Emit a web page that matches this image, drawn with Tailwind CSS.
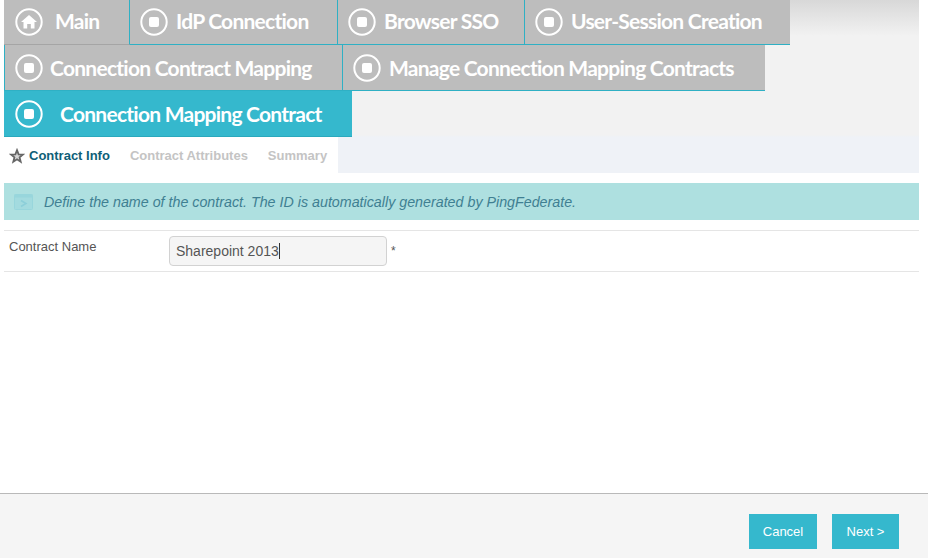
<!DOCTYPE html>
<html lang="en">
<head>
    <meta charset="UTF-8">
    <title>Connection Mapping Contract</title>
    <script src="https://cdn.jsdelivr.net/npm/@tailwindcss/browser@4"></script>
</head>
<body class="bg-white w-[928px] h-[558px] overflow-hidden flex flex-col font-['Liberation_Sans',sans-serif]">
    <!-- Breadcrumb + wizard tabs -->
    <div class="mx-1 w-[915px] h-[173px] bg-[linear-gradient(#d8d8d8_0px,#f2f2f2_36px,#f2f2f2_135px,#eff2f7_137px)] shrink-0">
        <div class="flex h-[45px] font-['Lato',sans-serif] font-bold text-[21px] tracking-[-0.75px] text-white">
            <a class="w-[126px] flex items-center bg-[#bdbdbd] border-r border-b border-r-[#2fb0c4] border-b-[#a5a5a5] pl-[11px] gap-3">
                <svg class="w-7 h-7" viewBox="0 0 28 28"><circle cx="14" cy="14" r="12.7" fill="none" stroke="#fff" stroke-width="2"/><path d="M14 7 L22 14 H19.5 V20.5 H15.8 V16 H12.2 V20.5 H8.5 V14 H6 Z" fill="#fff"/></svg>
                <span class="pb-[2px]">Main</span>
            </a>
            <a class="w-[208px] flex items-center bg-[#bdbdbd] border-r border-b border-[#2fb0c4] pl-[10px] gap-2">
                <svg class="w-7 h-7" viewBox="0 0 28 28"><circle cx="14" cy="14" r="12.7" fill="none" stroke="#fff" stroke-width="2"/><rect x="9" y="9" width="10" height="10" rx="2" fill="#fff"/></svg>
                <span class="pb-[2px]">IdP Connection</span>
            </a>
            <a class="w-[187px] flex items-center bg-[#bdbdbd] border-r border-b border-[#2fb0c4] pl-[10px] gap-2">
                <svg class="w-7 h-7" viewBox="0 0 28 28"><circle cx="14" cy="14" r="12.7" fill="none" stroke="#fff" stroke-width="2"/><rect x="9" y="9" width="10" height="10" rx="2" fill="#fff"/></svg>
                <span class="pb-[2px]">Browser SSO</span>
            </a>
            <a class="w-[265px] flex items-center bg-[#bdbdbd] border-b border-[#2fb0c4] pl-[10px] gap-2">
                <svg class="w-7 h-7" viewBox="0 0 28 28"><circle cx="14" cy="14" r="12.7" fill="none" stroke="#fff" stroke-width="2"/><rect x="9" y="9" width="10" height="10" rx="2" fill="#fff"/></svg>
                <span class="pb-[2px]">User-Session Creation</span>
            </a>
        </div>
        <div class="flex h-[46px] font-['Lato',sans-serif] font-bold text-[21px] tracking-[-0.75px] text-white">
            <a class="w-[339px] flex items-center bg-[#bdbdbd] border-l border-r border-b border-[#2fb0c4] pl-[10px] gap-[7px]">
                <svg class="w-7 h-7" viewBox="0 0 28 28"><circle cx="14" cy="14" r="12.7" fill="none" stroke="#fff" stroke-width="2"/><rect x="9" y="9" width="10" height="10" rx="2" fill="#fff"/></svg>
                <span>Connection Contract Mapping</span>
            </a>
            <a class="w-[422px] flex items-center bg-[#bdbdbd] border-b border-[#2fb0c4] pl-[10px] gap-2">
                <svg class="w-7 h-7" viewBox="0 0 28 28"><circle cx="14" cy="14" r="12.7" fill="none" stroke="#fff" stroke-width="2"/><rect x="9" y="9" width="10" height="10" rx="2" fill="#fff"/></svg>
                <span>Manage Connection Mapping Contracts</span>
            </a>
        </div>
        <div class="flex h-[46px] font-['Lato',sans-serif] font-bold text-[21px] tracking-[-0.75px] text-white">
            <a class="w-[348px] flex items-center bg-[#35b8cd] border-b border-[#2aa9bd] pl-[11px] gap-[17px]">
                <svg class="w-7 h-7" viewBox="0 0 28 28"><circle cx="14" cy="14" r="12.7" fill="none" stroke="#fff" stroke-width="2"/><rect x="9" y="9" width="10" height="10" rx="2" fill="#fff"/></svg>
                <span>Connection Mapping Contract</span>
            </a>
        </div>
        <div class="flex items-center w-[334px] h-9 bg-white text-[13px] font-bold">
            <svg class="w-4 h-4 ml-[5px] mt-[1px]" viewBox="0 0 16 16"><path d="M8 2.2 L9.6 6.3 L14 6.6 L10.6 9.4 L11.7 13.7 L8 11.3 L4.3 13.7 L5.4 9.4 L2 6.6 L6.4 6.3 Z" fill="#d8d8d8" stroke="#666" stroke-width="1.8"/></svg>
            <span class="ml-1 pt-px text-[#0f5f78]">Contract Info</span>
            <span class="ml-5 pt-px text-[#c4c4c4]">Contract Attributes</span>
            <span class="ml-5 pt-px text-[#c4c4c4]">Summary</span>
        </div>
    </div>

    <!-- Instructions -->
    <div class="mx-1 mt-[10px] w-[915px] h-[37px] bg-[#aee0e0] flex items-center shrink-0">
        <svg class="w-[19px] h-4 ml-[10px]" viewBox="0 0 19 16"><rect x="0.5" y="0.5" width="18" height="15" rx="1" fill="#a3dbdf" stroke="#98d6dc"/><rect x="0.5" y="0.5" width="18" height="3" fill="#98d6dc"/><path d="M7 6.5 L12 9.5 L7 12.5" fill="none" stroke="#8ccfd9" stroke-width="1.5"/></svg>
        <p class="ml-[11px] pt-[2px] text-[14.27px] italic text-[#3f7f92]">Define the name of the contract. The ID is automatically generated by PingFederate.</p>
    </div>

    <!-- Form -->
    <div class="mx-1 mt-[10px] w-[915px] h-[42px] border-y border-[#e5e5e5] flex shrink-0">
        <label class="w-[165px] pl-[5px] pt-[6px] text-[13px] text-[#555]">Contract Name</label>
        <div class="flex items-center pb-[1px]">
            <div class="w-[218px] h-[30px] bg-[#f5f5f5] border border-[#d2d2d2] rounded-[4px] flex items-center pl-[6px] text-sm text-[#555]">Sharepoint 2013<span class="w-px h-4 bg-[#333]"></span></div>
            <span class="ml-1 text-xs text-[#555]">*</span>
        </div>
    </div>

    <!-- Footer buttons -->
    <div class="mt-[221px] h-[65px] w-full bg-[#f5f5f5] border-t border-[#b9b9b9] flex justify-end items-start gap-[15px] pt-5 pr-[29px] shrink-0">
        <button class="w-[68px] h-[35px] bg-[#35b8cd] text-white text-[13px]">Cancel</button>
        <button class="w-[67px] h-[35px] bg-[#35b8cd] text-white text-[13px]">Next &gt;</button>
    </div>
</body>
</html>
